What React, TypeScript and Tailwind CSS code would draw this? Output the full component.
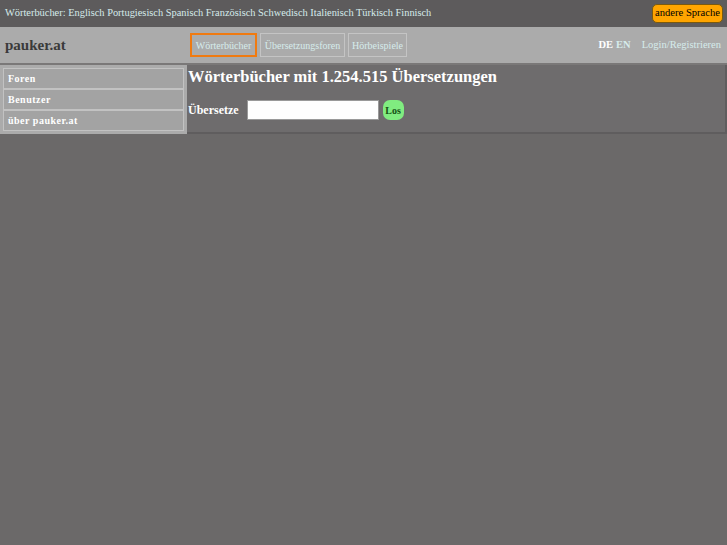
import React from "react";

export default function App() {
  const serif = { fontFamily: '"Liberation Serif", "Times New Roman", serif' };
  return (
    <div className="min-h-[545px] w-full bg-[#6b6969]" style={serif}>
      {/* top bar */}
      <div className="h-[27px] bg-[#5d5b5c] flex items-center justify-between pl-[5px] pr-[4px] pb-[1px]">
        <div className="text-[10.4px] text-[#d6ebeb]">
          Wörterbücher: Englisch Portugiesisch Spanisch Französisch Schwedisch Italienisch Türkisch Finnisch
        </div>
        <div className="h-[19px] px-[2px] flex items-center rounded-[5px] border border-[#7a5a10] bg-[#ffa500] text-[10.6px] text-black">
          andere Sprache
        </div>
      </div>
      {/* second bar */}
      <div className="h-[36px] bg-[#ababab] flex items-center">
        <div className="w-[190px] pl-[5px] text-[15px] font-bold text-[#3a3a3a]">pauker.at</div>
        <div className="flex gap-[3px] items-center">
          <div className="h-[24px] w-[67px] flex items-center justify-center border-2 border-[#f07a10] text-[10px] text-[#d6ebeb]">Wörterbücher</div>
          <div className="h-[24px] w-[85px] flex items-center justify-center border border-[#c4c4c4] text-[10px] text-[#d6ebeb]">Übersetzungsforen</div>
          <div className="h-[24px] w-[59px] flex items-center justify-center border border-[#c4c4c4] text-[10px] text-[#d6ebeb]">Hörbeispiele</div>
        </div>
        <div className="ml-auto flex items-center pr-[6px] text-[10.5px]">
          <span className="font-bold text-white">DE</span>
          <span className="ml-[3px] font-bold text-[#d6ebeb]">EN</span>
          <span className="ml-[11px] text-[#d6ebeb]">Login/Registrieren</span>
        </div>
      </div>
      {/* main */}
      <div className="flex border-t-2 border-[#7a7878]">
        <div className="w-[187px] bg-[#ababab] px-[3px] pt-[3px] pb-[3px]">
          {["Foren", "Benutzer", "über pauker.at"].map((t) => (
            <div
              key={t}
              className="h-[21px] flex items-center pl-[4px] bg-[#a3a3a3] border border-[#c2c2c2] text-[10px] font-bold text-white tracking-[0.5px]"
            >
              {t}
            </div>
          ))}
        </div>
        <div className="flex-1 bg-[#6e6c6d] border-b-2 border-r-2 border-[#5f5d5e] pl-[1px] pt-[2px]">
          <div className="text-[16.5px] font-bold text-white leading-[20px]">
            Wörterbücher mit 1.254.515 Übersetzungen
          </div>
          <div className="flex items-center mt-[13px]">
            <span className="text-[12px] font-bold text-white">Übersetze</span>
            <div className="ml-[8px] w-[132px] h-[20px] bg-white border border-[#9a9a9a]" />
            <div className="ml-[4px] w-[21px] h-[20px] rounded-[7px] bg-[#80ec80] flex items-center justify-center text-[10px] font-bold text-[#145014]">
              Los
            </div>
          </div>
        </div>
      </div>
    </div>
  );
}
